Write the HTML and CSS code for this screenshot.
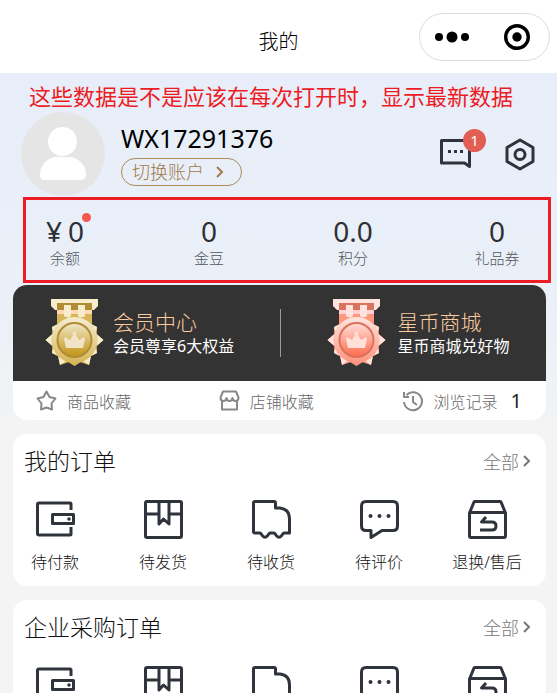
FILE: index.html
```html
<!DOCTYPE html>
<html lang="zh-CN">
<head>
<meta charset="utf-8">
<meta name="viewport" content="width=device-width, initial-scale=1">
<title>我的</title>
<link rel="stylesheet" href="styles.css">
</head>
<body>
<svg class="sprite" aria-hidden="true">
  <defs>
    <linearGradient id="shine" x1="0" y1="0" x2="0" y2="1">
      <stop offset="0" stop-color="#fff" stop-opacity=".75"/>
      <stop offset="1" stop-color="#fff" stop-opacity="0"/>
    </linearGradient>
    <symbol id="medal" viewBox="0 0 59 68">
      <path class="m-mid" d="M12 5h35v24H12z"/>
      <path class="m-light" d="M6 0h47v7l-4 4h-4V5H14v6h-4l-4-4z"/>
      <path class="m-dark" d="M12 4h35v7H12z"/>
      <path class="m-pale" d="M12 11h35v4H12z"/>
      <path class="m-light" d="M19 6h7v14h-7zM33 6h7v14h-7z"/>
      <path class="m-mid" d="M58.500 41L51.700 47L52 54L45.800 57.300L44 66L35.500 63.200L29.500 67L23.500 63.200L15 66L13.200 57.300L7 54L7.300 47L.5 41L7.300 35L7 28L13.200 24.700L15 16L23.500 18.800L29.500 15L35.500 18.800L44 16L45.800 24.700L52 28L51.700 35z"/>
      <path class="m-light" d="M.5 41l7-6v12zM58.500 41l-7-6v12zM15 66l-2-9 8 5zM44 66l2-9-8 5zM7 28l6-3-5 8zM52 28l-6-3 5 8zM7 54l6 3-5-8zM52 54l-6 3 5-8z"/>
      <circle class="m-mid" cx="29.500" cy="41" r="23"/>
      <circle cx="29.500" cy="41" r="23" fill="url(#shine)"/>
      <circle class="m-dark" cx="29.500" cy="41" r="18"/>
      <circle class="m-core" cx="29.500" cy="41" r="16"/>
      <circle cx="29.500" cy="41" r="16" fill="url(#shine)"/>
      <path class="m-crown" d="M21 49l-2-9 1-2 5 3 3-5a2 2 0 1 1 3 0l3 5 5-3 1 2-2 9z"/>
    </symbol>
    <symbol id="chevron" viewBox="0 0 8 14"><path d="M1 2l5 5-5 5"/></symbol>
    <symbol id="wallet" viewBox="0 0 39 39">
      <path d="M35 10V4q0-1-1-1H3Q1.500 3 1.500 4.500v29Q1.500 35 3 35h31q1 0 1-1v-7"/>
      <path d="M16.500 14.500h21v9h-21z"/><circle class="dot" cx="33" cy="19" r="1.800"/>
    </symbol>
    <symbol id="box" viewBox="0 0 39 39">
      <rect x="1.500" y="1.500" width="36" height="36" rx="1.500"/>
      <path d="M1.500 14H15M25 14h12.500M15 1.500V24l4.500-5 5.500 5V1.500"/>
    </symbol>
    <symbol id="truck" viewBox="0 0 39 39">
      <path d="M3 1.500h19q1.500 0 1.500 1.500v5H28q9.500 1 9.500 11v14H32q-1 0-1.500 1.500-3.500 5.500-7 0Q23 33 22 33H18q-1 0-1.500 1.500-3.500 5.500-7 0Q9 33 8 33H3q-1.500 0-1.500-1.500V3Q1.500 1.500 3 1.500z"/>
    </symbol>
    <symbol id="comment" viewBox="0 0 39 39">
      <path d="M6 1.500h27q4.500 0 4.500 4.500v20q0 4.500-4.500 4.500H22l-11 7v-7H6Q1.500 30.500 1.500 26V6Q1.500 1.500 6 1.500z"/>
      <g class="dot"><circle cx="10.500" cy="16" r="2"/><circle cx="19.500" cy="16" r="2"/><circle cx="28.500" cy="16" r="2"/></g>
    </symbol>
    <symbol id="refund" viewBox="0 0 39 39">
      <path d="M1.500 13L6 2q.3-.5 1-.5h25q.7 0 1 .5l4.500 11v23q0 1.500-1.500 1.500H3Q1.500 37.500 1.500 36zM1.500 12.500h36"/>
      <path d="M18 17l-4.500 5H24q4 0 4 4t-4 4H12"/>
    </symbol>
  </defs>
</svg>

<header class="topbar">
  <h1 class="topbar-title">我的</h1>
  <div class="capsule">
    <button class="plain" aria-label="更多"><svg width="34" height="12" viewBox="0 0 34 12"><circle cx="4" cy="6" r="4"/><circle cx="17" cy="6" r="5.500"/><circle cx="30" cy="6" r="4"/></svg></button>
    <button class="plain" aria-label="关闭"><svg width="26" height="26" viewBox="0 0 26 26"><circle cx="13" cy="13" r="11.300" fill="none" stroke="#000" stroke-width="3.400"/><circle cx="13" cy="13" r="4.700"/></svg></button>
  </div>
</header>

<main>
  <section class="hero">
    <p class="note">这些数据是不是应该在每次打开时，显示最新数据</p>
    <div class="user">
      <svg class="avatar" viewBox="0 0 84 84" role="img" aria-label="头像"><circle cx="42" cy="42" r="42" fill="#e5e5e5"/><circle cx="41.500" cy="29.500" r="14.500" fill="#fff"/><path d="M19 62c0-10 9-17 17-17h12c9 0 17 8 17 17 0 4-2 6-5 6H24c-4 0-5-2-5-6z" fill="#fff"/></svg>
      <div class="identity">
        <div class="name">WX17291376</div>
        <button class="switch">切换账户<svg class="chev" width="8" height="14"><use href="#chevron"/></svg></button>
      </div>
      <div class="tools">
        <button class="plain message" aria-label="消息"><svg class="line" width="31" height="31" viewBox="0 0 31 31"><path d="M1.500 1.500h28v26l-5-3.500h-23z"/><path class="dot" d="M8 11h3v3H8zM14 11h3v3h-3zM20 11h3v3h-3z"/></svg><span class="badge">1</span></button>
        <button class="plain" aria-label="设置"><svg class="line" width="30" height="33" viewBox="0 0 30 33"><path d="M15 2l13 7.500v14L15 31 2 23.500v-14z"/><circle cx="15" cy="16.500" r="5"/></svg></button>
      </div>
    </div>
    <div class="stats">
      <div class="stat"><div class="value money"><span class="yen">¥</span>0</div><div class="label">余额</div></div>
      <div class="stat"><div class="value">0</div><div class="label">金豆</div></div>
      <div class="stat"><div class="value">0.0</div><div class="label">积分</div></div>
      <div class="stat"><div class="value">0</div><div class="label">礼品券</div></div>
    </div>
    <div class="member">
      <div class="clubs">
        <a class="club" href="#"><svg class="gold" width="59" height="68"><use href="#medal"/></svg><span><strong>会员中心</strong><small>会员尊享6大权益</small></span></a>
        <a class="club second" href="#"><svg class="rose" width="59" height="68"><use href="#medal"/></svg><span><strong>星币商城</strong><small>星币商城兑好物</small></span></a>
      </div>
      <nav class="links">
        <a href="#"><svg width="21" height="21" viewBox="0 0 21 21"><path d="M10.500 1.500l3 5.500 6 1.500-4 5 .5 6-5.500-2-5.500 2 .5-6-4-5 6-1.500z"/></svg>商品收藏</a>
        <a href="#"><svg width="21" height="21" viewBox="0 0 21 21"><path d="M4 1.500h13l2.500 6q0 3.500-3 3.500-2.500 0-3-3-.5 3-3 3t-3-3q-.5 3-3 3-3 0-3-3.500zM3 11v8.500h15V11"/></svg>店铺收藏</a>
        <a href="#"><svg width="22" height="22" viewBox="0 0 22 22"><path d="M4.500 5a9 9 0 1 1-2.500 7M2 2v5h5M11 6v6l4 3"/></svg>浏览记录<b>1</b></a>
      </nav>
    </div>
  </section>

  <section class="orders">
    <div class="orders-head"><h2>我的订单</h2><a href="#">全部<svg class="chev" width="8" height="14"><use href="#chevron"/></svg></a></div>
    <nav class="steps">
      <a href="#"><svg class="line"><use href="#wallet"/></svg>待付款</a>
      <a href="#"><svg class="line"><use href="#box"/></svg>待发货</a>
      <a href="#"><svg class="line"><use href="#truck"/></svg>待收货</a>
      <a href="#"><svg class="line"><use href="#comment"/></svg>待评价</a>
      <a href="#"><svg class="line"><use href="#refund"/></svg>退换/售后</a>
    </nav>
  </section>

  <section class="orders">
    <div class="orders-head"><h2>企业采购订单</h2><a href="#">全部<svg class="chev" width="8" height="14"><use href="#chevron"/></svg></a></div>
    <nav class="steps">
      <a href="#"><svg class="line"><use href="#wallet"/></svg>待付款</a>
      <a href="#"><svg class="line"><use href="#box"/></svg>待发货</a>
      <a href="#"><svg class="line"><use href="#truck"/></svg>待收货</a>
      <a href="#"><svg class="line"><use href="#comment"/></svg>待评价</a>
      <a href="#"><svg class="line"><use href="#refund"/></svg>退换/售后</a>
    </nav>
  </section>
</main>
</body>
</html>
```
FILE: styles.css
```css
* { box-sizing: border-box; }

html { scrollbar-width: none; }

body {
  margin: 0;
  background: #f4f4f4;
  color: #111;
  font-family: "Noto Sans", "Noto Sans CJK SC", sans-serif;
  font-size: 16px;
  font-weight: 300;
}

h1, h2, p { margin: 0; font-weight: 300; }
a { color: inherit; text-decoration: none; }
svg { display: block; flex: none; }
button { font: inherit; color: inherit; cursor: pointer; }
.plain { padding: 0; border: 0; background: none; }

.sprite { position: absolute; width: 0; height: 0; }

.line { fill: none; stroke: #2f333b; stroke-width: 3; stroke-linejoin: round; }
.dot { fill: #2f333b; stroke: none; }
.chev { fill: none; stroke: currentColor; stroke-width: 2; }

.topbar {
  display: grid;
  grid-template-columns: 1fr auto 1fr;
  align-items: center;
  height: 73px;
  padding: 0 7px;
  background: #fff;
}
.topbar-title { grid-column: 2; padding-top: 10px; font-size: 20px; line-height: 28px; color: #000; }
.capsule {
  justify-self: end;
  display: flex;
  align-items: center;
  justify-content: space-between;
  width: 131px;
  height: 48px;
  padding: 0 19px 0 15px;
  border: 1px solid #dcdcdc;
  border-radius: 24px;
}

.hero {
  padding: 7px 11px 0 13px;
  background: linear-gradient(#e7eef9, #eaf0f8 60%, #f1f3f5);
}
.note { padding-left: 16px; font-size: 22px; line-height: 32px; font-weight: 400; color: #ed1c24; white-space: nowrap; }

.user { display: flex; align-items: center; gap: 16px; padding: 0 11px 0 8px; }
.avatar { width: 84px; height: 84px; }
.identity { flex: 1; }
.name { padding-bottom: 4px; font-size: 25px; line-height: 32px; font-weight: 400; color: #000; }
.switch {
  display: flex;
  align-items: center;
  gap: 12px;
  height: 28px;
  padding: 0 17px 0 10px;
  border: 1px solid #b08a55;
  border-radius: 14px;
  background: none;
  font-size: 18px;
  line-height: 24px;
  color: #a07a48;
}
.tools { display: flex; align-items: center; gap: 34px; }
.message { position: relative; }
.badge {
  position: absolute;
  top: -10px;
  right: -15px;
  width: 23px;
  height: 23px;
  border-radius: 50%;
  background: #e15f52;
  color: #fff;
  font-size: 15px;
  line-height: 23px;
  font-weight: 400;
}

.stats {
  display: flex;
  justify-content: space-between;
  margin: 1px -5px 2px 10px;
  padding: 15px 27px 12px 15px;
  border: 3px solid #ed1c24;
}
.stat { width: 48px; text-align: center; white-space: nowrap; }
.value { height: 33px; font-size: 28px; line-height: 33px; font-weight: 400; color: #2f2f36; }
.money { position: relative; }
.money::after {
  content: "";
  position: absolute;
  top: -2px;
  right: -2px;
  width: 9px;
  height: 9px;
  border-radius: 50%;
  background: #f5574c;
}
.yen { margin-right: 6px; }
.label { font-size: 15px; line-height: 20px; color: #555; }

.member {
  overflow: hidden;
  border-radius: 14px;
  background: #fff;
}
.clubs { display: grid; grid-template-columns: 1fr 1fr; align-items: center; height: 96px; background: #333; }
.club { display: flex; align-items: center; gap: 9px; height: 48px; padding-left: 32px; color: #fff; }
.second { gap: 12px; padding-left: 46px; border-left: 1px solid #999; }
.club strong, .club small { display: block; white-space: nowrap; }
.club strong { font-size: 21px; line-height: 26px; font-weight: 300; color: #fbcba0; }
.club small { font-size: 16px; line-height: 23px; font-weight: 400; }
.gold { --light: #f7eccb; --pale: #ffd9b5; --mid: #d8b658; --dark: #b08d35; --core: #c39517; --crown: #f1e4c6; }
.rose { --light: #ffe3dc; --pale: #ffd0d4; --mid: #ff967f; --dark: #d8735f; --core: #ff6f50; --crown: #ffe1da; }
.m-light { fill: var(--light); }
.m-pale { fill: var(--pale); }
.m-mid { fill: var(--mid); }
.m-dark { fill: var(--dark); }
.m-core { fill: var(--core); }
.m-crown { fill: var(--crown); }

.links {
  display: flex;
  align-items: center;
  justify-content: space-between;
  height: 39px;
  padding: 0 24px 0 23px;
  color: #666;
}
.links a { display: flex; align-items: center; gap: 10px; }
.links svg { fill: none; stroke: #888; stroke-width: 2; stroke-linejoin: round; }
.links b { padding-left: 3px; font-size: 20px; line-height: 28px; font-weight: 400; color: #222; }

.orders {
  margin: 14px 11px 0 13px;
  padding-bottom: 12px;
  border-radius: 14px;
  background: #fff;
}
.orders-head { display: flex; align-items: center; justify-content: space-between; height: 54px; padding: 0 15px 0 11px; }
.orders-head h2 { font-size: 23px; line-height: 32px; }
.orders-head a { display: flex; align-items: center; gap: 4px; font-size: 18px; color: #777; }
.steps { display: flex; justify-content: space-between; padding: 12px 22px 0 5px; }
.steps a {
  display: flex;
  flex-direction: column;
  align-items: center;
  gap: 11px;
  width: 74px;
  line-height: 24px;
  white-space: nowrap;
}
.steps svg { width: 39px; height: 39px; }
```
